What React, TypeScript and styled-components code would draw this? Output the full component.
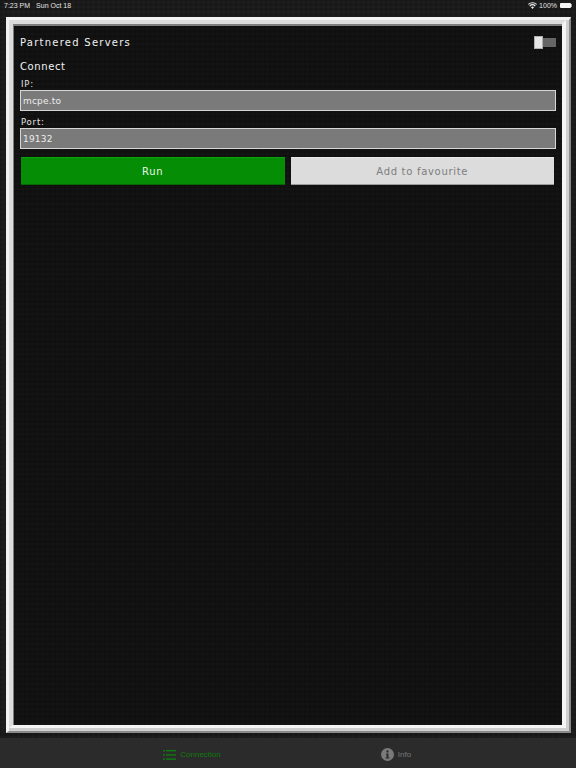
import React from 'react';
import styled, { createGlobalStyle } from 'styled-components';

const GlobalStyle = createGlobalStyle`
  html, body {
    margin: 0;
    padding: 0;
    background: #1a1a1a;
  }
  #root {
    width: 576px;
    height: 768px;
  }
`;

const Page = styled.div`
  display: flex;
  flex-direction: column;
  width: 576px;
  height: 768px;
  overflow: hidden;
  font-family: "DejaVu Sans", sans-serif;
  background-color: #1a1a1a;
  background-image:
    repeating-linear-gradient(0deg, rgba(255, 255, 255, 0.014) 0 2px, transparent 2px 5px),
    repeating-linear-gradient(90deg, rgba(0, 0, 0, 0.12) 0 2px, transparent 2px 5px);
`;

const StatusBar = styled.div`
  display: flex;
  align-items: center;
  justify-content: space-between;
  height: 11px;
  padding: 0 5px 0 4px;
  font: 7px "Liberation Sans", sans-serif;
  color: #e4e4e4;
`;

const StatusGroup = styled.div`
  display: flex;
  align-items: center;
  gap: 6px;
`;

const StatusRight = styled(StatusGroup)`
  gap: 2px;
`;

const Battery = styled.div`
  position: relative;
  width: 11px;
  height: 5px;
  margin-left: 1px;
  background: #f4f4f4;
  border-radius: 1px;

  &::after {
    content: '';
    position: absolute;
    top: 1px;
    right: -1px;
    width: 1px;
    height: 3px;
    background: #9a9a9a;
  }
`;

const Frame = styled.main`
  flex: 1;
  display: flex;
  margin: 6px 5px 5px 6px;
  padding: 0 3px 3px 0;
  background: #cfcfcf;
  border-top: 3px solid #f2f2f2;
  border-left: 3px solid #f2f2f2;
  border-right: 2px solid #8a8a8a;
  border-bottom: 2px solid #8a8a8a;
`;

const FrameMiddle = styled.div`
  flex: 1;
  display: flex;
  border-top: 4px solid #dcdcdc;
  border-left: 4px solid #dcdcdc;
  border-right: 4px solid #f4f4f4;
  border-bottom: 3px solid #f4f4f4;
`;

const Panel = styled.div`
  flex: 1;
  display: flex;
  flex-direction: column;
  padding: 7px 6px 0 6px;
  background-color: #111111;
  background-image:
    repeating-linear-gradient(0deg, rgba(255, 255, 255, 0.012) 0 2px, transparent 2px 5px),
    repeating-linear-gradient(90deg, rgba(0, 0, 0, 0.14) 0 2px, transparent 2px 5px);
  border-top: 2px solid #7d7d7d;
  border-left: 1px solid #7d7d7d;
`;

const HeaderRow = styled.div`
  display: flex;
  align-items: center;
  justify-content: space-between;
  height: 16px;
  margin-top: 1px;
`;

const Title = styled.div`
  font-size: 10px;
  letter-spacing: 1.25px;
  color: #f2f2f2;
  white-space: nowrap;
`;

const Toggle = styled.div`
  display: flex;
  align-items: center;
  width: 22px;
  height: 13px;
`;

const ToggleKnob = styled.div`
  width: 9px;
  height: 13px;
  box-sizing: border-box;
  background: #e6e6e6;
  border: 1px solid #b0b0b0;
`;

const ToggleTrack = styled.div`
  width: 13px;
  height: 9px;
  background: #666666;
`;

const SectionTitle = styled(Title)`
  margin-top: 10px;
  line-height: 14px;
  letter-spacing: 0.6px;
`;

const FieldLabel = styled.div`
  margin-top: 4px;
  padding-left: 1px;
  font-size: 8.5px;
  letter-spacing: 0.8px;
  line-height: 12px;
  color: #e4e4e4;
`;

const FieldBox = styled.div`
  display: flex;
  align-items: center;
  box-sizing: border-box;
  height: 21px;
  padding-left: 2px;
  margin-bottom: 1px;
  background: #7a7a7a;
  border: 1px solid #d6d6d6;
  font-size: 9px;
  letter-spacing: 0.2px;
  color: #ececec;
`;

const ButtonRow = styled.div`
  display: flex;
  gap: 6px;
  margin-top: 7px;
  padding: 0 2px 0 1px;
`;

const ActionButton = styled.div<{ $variant: 'primary' | 'disabled' }>`
  flex: 1;
  display: flex;
  align-items: center;
  justify-content: center;
  height: 28px;
  font-size: 10px;
  letter-spacing: 0.7px;
  box-sizing: border-box;
  color: ${p => (p.$variant === 'primary' ? '#e8f5e8' : '#7d7d7d')};
  background: ${p => (p.$variant === 'primary' ? '#058d05' : '#dcdcdc')};
  border-top: 1px solid ${p => (p.$variant === 'primary' ? '#0aa30a' : '#e8e8e8')};
  border-bottom: 1px solid ${p => (p.$variant === 'primary' ? '#056805' : '#9a9a9a')};
`;

const TabBar = styled.nav`
  display: grid;
  grid-template-columns: 204px 204px;
  height: 30px;
  padding-left: 90px;
  background: #2b2b2b;
`;

const Tab = styled.div<{ $active?: boolean }>`
  display: flex;
  align-items: center;
  justify-content: center;
  gap: 4px;
  padding-top: 3px;
  font: 8px "Liberation Sans", sans-serif;
  color: ${p => (p.$active ? '#0f7a0f' : '#777777')};
`;

const WifiIcon = () => (
  <svg width="9" height="7" viewBox="0 0 18 14" fill="#efefef">
    <path d="M9 14 6 10.6a4.4 4.4 0 0 1 6 0L9 14ZM4.4 8.8 2.6 6.8a9.6 9.6 0 0 1 12.8 0l-1.8 2a6.9 6.9 0 0 0-9.2 0ZM1.4 5.4 0 3.8a13.4 13.4 0 0 1 18 0l-1.4 1.6a11.3 11.3 0 0 0-15.2 0Z" />
  </svg>
);

const ListIcon = () => (
  <svg width="13" height="10" viewBox="0 0 13 10" fill="#0f7a0f">
    <rect x="0" y="0" width="2" height="1.4" />
    <rect x="3" y="0" width="10" height="1.4" />
    <rect x="0" y="4.2" width="2" height="1.4" />
    <rect x="3" y="4.2" width="10" height="1.4" />
    <rect x="0" y="8.4" width="2" height="1.4" />
    <rect x="3" y="8.4" width="10" height="1.4" />
  </svg>
);

const InfoDisc = () => (
  <svg width="13" height="13" viewBox="0 0 26 26">
    <circle cx="13" cy="13" r="13" fill="#7a7a7a" />
    <circle cx="13" cy="7" r="2.3" fill="#2b2b2b" />
    <path d="M10 11h5v8h2v2H9v-2h2v-6h-1Z" fill="#2b2b2b" />
  </svg>
);

export default function App() {
  return (
    <Page>
      <GlobalStyle />
      <StatusBar>
        <StatusGroup>
          <span>7:23 PM</span>
          <span>Sun Oct 18</span>
        </StatusGroup>
        <StatusRight>
          <WifiIcon />
          <span>100%</span>
          <Battery />
        </StatusRight>
      </StatusBar>
      <Frame>
        <FrameMiddle>
          <Panel>
            <HeaderRow>
              <Title>Partnered Servers</Title>
              <Toggle>
                <ToggleKnob />
                <ToggleTrack />
              </Toggle>
            </HeaderRow>
            <SectionTitle>Connect</SectionTitle>
            <FieldLabel>IP:</FieldLabel>
            <FieldBox>mcpe.to</FieldBox>
            <FieldLabel>Port:</FieldLabel>
            <FieldBox>19132</FieldBox>
            <ButtonRow>
              <ActionButton $variant="primary">Run</ActionButton>
              <ActionButton $variant="disabled">Add to favourite</ActionButton>
            </ButtonRow>
          </Panel>
        </FrameMiddle>
      </Frame>
      <TabBar>
        <Tab $active>
          <ListIcon />
          <span>Connection</span>
        </Tab>
        <Tab>
          <InfoDisc />
          <span>Info</span>
        </Tab>
      </TabBar>
    </Page>
  );
}
